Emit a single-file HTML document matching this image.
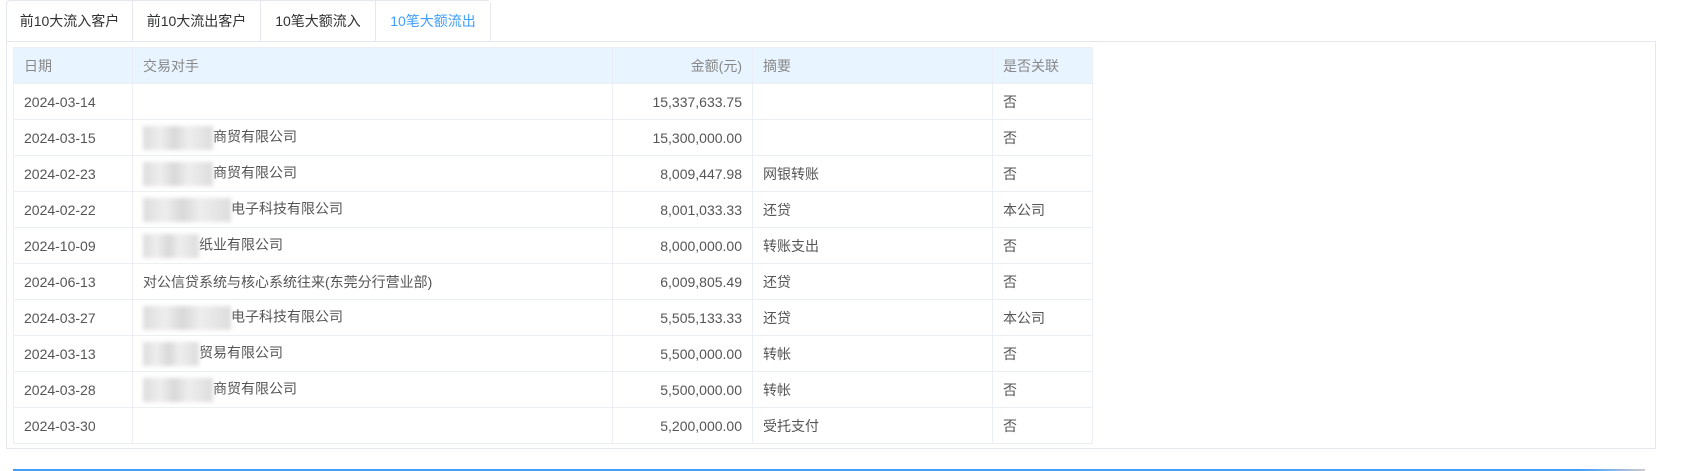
<!DOCTYPE html>
<html><head><meta charset="utf-8"><style>
*{box-sizing:border-box;margin:0;padding:0}
body{width:1692px;height:471px;background:#fff;font-family:"Liberation Sans","Noto Sans CJK SC",sans-serif;font-size:14px;color:#333;position:relative;overflow:hidden}
.tabs{position:absolute;left:6px;top:0;height:42px;display:flex;border:1px solid #e4e7ed;border-bottom:none;border-radius:4px 4px 0 0;background:#fff}
.tab{height:41px;line-height:41px;padding:0 0;text-align:center;border-right:1px solid #e4e7ed;color:#303133;font-size:14px}
.tab.a{color:#409eff;border-right:none;background:#fff;height:42px}
.panel{position:absolute;left:6px;top:41px;width:1650px;height:408px;border:1px solid #e4e7ed}
table{position:absolute;left:13px;top:47px;border-collapse:collapse;table-layout:fixed}
td,th{border:1px solid #ebeef5;height:36px;padding:0 10px;font-weight:normal;text-align:left;white-space:nowrap;overflow:hidden}
th{background:#e8f4ff;color:#888;height:36px}
td{color:#555}
.r{text-align:right}
.blur{display:inline-block;vertical-align:middle;height:24px;background:linear-gradient(90deg,#ddd 0,#eee 25%,#d8d8d8 45%,#eee 65%,#ddd 100%);filter:blur(2px);margin-right:0}
.line{position:absolute;left:13px;top:469px;width:1632px;height:2px;background:linear-gradient(90deg,#409eff 0,#409eff 96%,#ccc 100%)}
</style></head><body>
<div class="tabs">
<div class="tab" style="width:126px">前10大流入客户</div>
<div class="tab" style="width:128px">前10大流出客户</div>
<div class="tab" style="width:115px">10笔大额流入</div>
<div class="tab a" style="width:114px">10笔大额流出</div>
</div>
<div class="panel"></div>
<table>
<colgroup><col style="width:119px"><col style="width:480px"><col style="width:140px"><col style="width:240px"><col style="width:100px"></colgroup>
<tr><th>日期</th><th>交易对手</th><th class="r">金额(元)</th><th>摘要</th><th>是否关联</th></tr>
<tr><td>2024-03-14</td><td></td><td class="r">15,337,633.75</td><td></td><td>否</td></tr>
<tr><td>2024-03-15</td><td><span class="blur" style="width:70px"></span>商贸有限公司</td><td class="r">15,300,000.00</td><td></td><td>否</td></tr>
<tr><td>2024-02-23</td><td><span class="blur" style="width:70px"></span>商贸有限公司</td><td class="r">8,009,447.98</td><td>网银转账</td><td>否</td></tr>
<tr><td>2024-02-22</td><td><span class="blur" style="width:88px"></span>电子科技有限公司</td><td class="r">8,001,033.33</td><td>还贷</td><td>本公司</td></tr>
<tr><td>2024-10-09</td><td><span class="blur" style="width:56px"></span>纸业有限公司</td><td class="r">8,000,000.00</td><td>转账支出</td><td>否</td></tr>
<tr><td>2024-06-13</td><td>对公信贷系统与核心系统往来(东莞分行营业部)</td><td class="r">6,009,805.49</td><td>还贷</td><td>否</td></tr>
<tr><td>2024-03-27</td><td><span class="blur" style="width:88px"></span>电子科技有限公司</td><td class="r">5,505,133.33</td><td>还贷</td><td>本公司</td></tr>
<tr><td>2024-03-13</td><td><span class="blur" style="width:56px"></span>贸易有限公司</td><td class="r">5,500,000.00</td><td>转帐</td><td>否</td></tr>
<tr><td>2024-03-28</td><td><span class="blur" style="width:70px"></span>商贸有限公司</td><td class="r">5,500,000.00</td><td>转帐</td><td>否</td></tr>
<tr><td>2024-03-30</td><td></td><td class="r">5,200,000.00</td><td>受托支付</td><td>否</td></tr>
</table>
<div class="line"></div>
</body></html>
